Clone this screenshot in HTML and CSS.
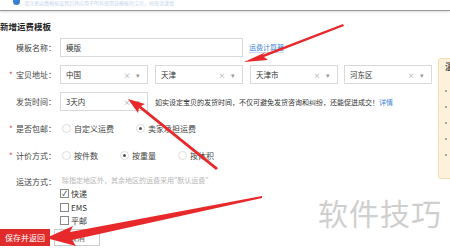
FILE: index.html
```html
<!DOCTYPE html>
<html lang="zh-CN">
<head>
    <meta charset="UTF-8">
    <title>新增运费模板</title>
    <link rel="stylesheet" href="styles.css">
</head>
<body>

<div class="pagina">
    <div class="topo">
        <span class="info-icone"></span>
        <span class="topo-texto">请注意运费模板设置后将应用于所有使用该模板的宝贝，修改请谨慎</span>
    </div>

    <h2 class="titulo">新增运费模板</h2>

    <div class="linha primeira">
        <div class="rotulo">模板名称：</div>
        <div class="campo campo-nome">模版</div>
        <a class="link link-calc">运费计算器</a>
    </div>

    <div class="linha">
        <div class="rotulo"><i>*</i>宝贝地址：</div>
        <div class="campo sel">中国<span class="ctrl">× ▾</span></div>
        <div class="campo sel">天津<span class="ctrl">× ▾</span></div>
        <div class="campo sel">天津市<span class="ctrl">× ▾</span></div>
        <div class="campo sel">河东区<span class="ctrl">× ▾</span></div>
    </div>

    <div class="linha">
        <div class="rotulo">发货时间：</div>
        <div class="campo sel">3天内<span class="ctrl">× ▾</span></div>
        <span class="dica">如实设定宝贝的发货时间，不仅可避免发货咨询和纠纷，还能促进成交！<a class="link">详情</a></span>
    </div>

    <div class="linha">
        <div class="rotulo"><i>*</i>是否包邮：</div>
        <label class="opcao"><span class="radio"></span>自定义运费</label>
        <label class="opcao"><span class="radio ativo"></span>卖家承担运费</label>
    </div>

    <div class="linha">
        <div class="rotulo"><i>*</i>计价方式：</div>
        <label class="opcao"><span class="radio"></span>按件数</label>
        <label class="opcao"><span class="radio ativo"></span>按重量</label>
        <label class="opcao"><span class="radio"></span>按体积</label>
    </div>

    <div class="linha linha-envio">
        <div class="rotulo">运送方式：</div>
        <div class="envio">
            <div class="envio-nota">除指定地区外，其余地区的运费采用"默认运费"</div>
            <label class="check"><span class="caixa marcada">✓</span>快递</label>
            <label class="check"><span class="caixa"></span>EMS</label>
            <label class="check"><span class="caixa"></span>平邮</label>
        </div>
    </div>

    <div class="botoes">
        <button class="btn-salvar">保存并返回</button>
        <button class="btn-cancelar">取消</button>
    </div>

    <!-- painel lateral -->
    <div class="painel">
        <b>温</b>
        <span></span><span></span><span></span><span></span><span></span>
    </div>

    <div class="marca">软件技巧</div>

    <svg class="setas" width="450" height="248" viewBox="0 0 450 248">
        <g fill="#e8292b">
            <polygon points="343,24 262,55 266,52 244,62 268,60 264,57 344,26"/>
            <polygon points="218,168 141,106 145,104 128,99 138,113 139,108 216,170"/>
            <polygon points="262,196 70,232 73,226 46,238 76,246 72,240 262,198"/>
        </g>
    </svg>
</div>

</body>
</html>
```

FILE: styles.css
```css
/* base */
body {
    margin: 0;
    background: #fff;
    font-family: "Noto Sans CJK SC", "Liberation Sans", sans-serif;
    font-size: 8px;
    color: #333;
}

.pagina {
    position: relative;
    width: 450px;
    height: 248px;
    overflow: hidden;
}

.topo {
    height: 10px;
    display: flex;
    align-items: flex-start;
    gap: 4px;
    padding-left: 13px;
    border-bottom: 1px solid #999;
    box-shadow: 0 1px 2px rgba(0, 0, 0, 0.15);
    overflow: hidden;
}

.info-icone {
    width: 7px;
    height: 7px;
    margin-top: -2px;
    border-radius: 50%;
    background: #3b7fd4;
}

.topo-texto {
    font-size: 5px;
    line-height: 6px;
    color: #c5d6ec;
    white-space: nowrap;
}

.titulo {
    margin: 8px 0 0 0;
    height: 14px;
    font-size: 8.5px;
    line-height: 14px;
    font-weight: bold;
    color: #222;
}

.linha {
    display: flex;
    align-items: center;
    height: 19px;
    margin-top: 8px;
}

.linha.primeira {
    margin-top: 5px;
}

.rotulo {
    width: 60px;
    flex: none;
    padding-left: 16px;
    box-sizing: border-box;
    position: relative;
    white-space: nowrap;
    color: #444;
}

.rotulo i {
    position: absolute;
    left: 9px;
    top: 0;
    font-style: normal;
    color: #e4393c;
}

.campo {
    height: 19px;
    box-sizing: border-box;
    border: 1px solid #d9d9d9;
    background: #fff;
    padding: 0 5px;
    display: flex;
    align-items: center;
    font-size: 7.5px;
    color: #333;
}

.campo-nome {
    width: 183px;
}

.link {
    color: #3a84d8;
    font-size: 7px;
}

.link-calc {
    margin-left: 6px;
    border-bottom: 1px solid #c6daf2;
}

.sel {
    width: 88px;
    justify-content: space-between;
    margin-right: 7px;
}

.sel:nth-child(4) {
    margin-right: 6px;
}

.ctrl {
    font-size: 7px;
    color: #999;
    letter-spacing: 2px;
}

.dica {
    font-size: 7px;
    color: #333;
    white-space: nowrap;
}

.opcao {
    display: flex;
    align-items: center;
    gap: 3px;
    margin-right: 22px;
    color: #444;
}

.opcao:nth-child(2) {
    margin-left: 2px;
}

.radio {
    width: 7px;
    height: 7px;
    border: 1px solid #ddd;
    border-radius: 50%;
    position: relative;
}

.radio.ativo::after {
    content: "";
    position: absolute;
    left: 2px;
    top: 2px;
    width: 3px;
    height: 3px;
    border-radius: 50%;
    background: #555;
}

.linha-envio {
    align-items: flex-start;
    height: auto;
}

.linha-envio .rotulo {
    margin-top: 3px;
}

.envio {
    display: flex;
    flex-direction: column;
    margin-top: 2px;
}

.envio-nota {
    font-size: 7px;
    color: #b5b5b5;
    margin-left: 2px;
    margin-bottom: 2px;
    white-space: nowrap;
}

.check {
    display: flex;
    align-items: center;
    gap: 2px;
    height: 13.5px;
    color: #333;
}

.caixa {
    width: 7px;
    height: 7px;
    border: 1px solid #888;
    font-size: 7px;
    line-height: 7px;
    text-align: center;
    color: #222;
}

.botoes {
    display: flex;
    gap: 4px;
    margin-top: 1px;
}

.btn-salvar, .btn-cancelar {
    height: 17px;
    padding: 0;
    font-family: inherit;
    font-size: 8px;
    border-radius: 0;
}

.btn-salvar {
    width: 50px;
    background: #e02b2b;
    color: #fff;
    border: none;
}

.btn-cancelar {
    width: 46px;
    background: #fff;
    color: #666;
    border: 1px solid #ccc;
}

.painel {
    position: absolute;
    left: 438px;
    top: 58px;
    width: 30px;
    height: 121px;
    box-sizing: border-box;
    background: #fdf1dc;
    border: 1px solid #f3dbb3;
    border-radius: 3px;
    display: flex;
    flex-direction: column;
    padding: 3px 0 0 6px;
}

.painel b {
    color: #555;
    font-size: 9px;
    line-height: 10px;
    margin-bottom: 18px;
}

.painel span {
    width: 2px;
    height: 2px;
    background: #aaa;
    margin-bottom: 14px;
}

.marca {
    position: absolute;
    left: 318px;
    top: 190px;
    font-size: 30px;
    color: #cfcfcf;
    letter-spacing: 1px;
}

.setas {
    position: absolute;
    left: 0;
    top: 0;
}
```
